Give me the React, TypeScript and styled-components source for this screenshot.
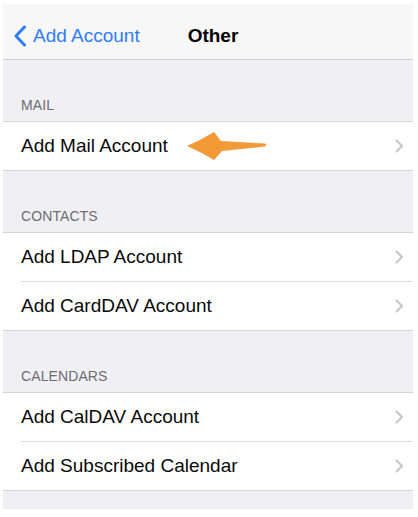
import React from 'react';
import styled, { createGlobalStyle } from 'styled-components';

const GlobalStyle = createGlobalStyle`
  body {
    margin: 0;
    background: #ffffff;
    font-family: 'Liberation Sans', Arial, sans-serif;
  }
`;

interface Section {
  title: string;
  items: string[];
}

const sections: Section[] = [
  { title: 'MAIL', items: ['Add Mail Account'] },
  { title: 'CONTACTS', items: ['Add LDAP Account', 'Add CardDAV Account'] },
  { title: 'CALENDARS', items: ['Add CalDAV Account', 'Add Subscribed Calendar'] },
];

const BackChevron = () => (
  <svg width="14" height="22" viewBox="0 0 14 22">
    <path d="M11.5 2 L3 11 L11.5 20" fill="none" stroke="#2f7df6" strokeWidth="3" strokeLinecap="round" strokeLinejoin="round" />
  </svg>
);

const RowChevron = () => (
  <svg width="9" height="14" viewBox="0 0 9 14">
    <path d="M1.5 1.5 L7 7 L1.5 12.5" fill="none" stroke="#c5c5c9" strokeWidth="2" strokeLinecap="round" strokeLinejoin="round" />
  </svg>
);

const PointerArrow = () => (
  <ArrowBox>
    <svg width="84" height="32" viewBox="0 0 84 32">
      <path
        d="M2 16 Q16 10 29 2 L36 11 L80 13.5 Q82.5 15 80 16.5 L37 21 L29 30 Q16 22 2 16 Z"
        fill="#f29a38"
      />
    </svg>
  </ArrowBox>
);

const App: React.FC = () => {
  return (
    <Screen>
      <GlobalStyle />
      <NavBar>
        <BackButton>
          <BackChevron />
          <span>Add Account</span>
        </BackButton>
        <NavTitle>Other</NavTitle>
        <span />
      </NavBar>
      {sections.map((section) => (
        <React.Fragment key={section.title}>
          <SectionHeader>{section.title}</SectionHeader>
          <Group>
            {section.items.map((item, i) => (
              <Row key={item}>
                <RowInner $first={i === 0}>
                  <RowLabel>{item}</RowLabel>
                  <RowChevron />
                </RowInner>
                {item === 'Add Mail Account' && <PointerArrow />}
              </Row>
            ))}
          </Group>
        </React.Fragment>
      ))}
      <Footer />
    </Screen>
  );
};

export default App;

const Screen = styled.div`
  margin: 4px 5px 0 3px;
  background: #efeff4;
  display: flex;
  flex-direction: column;
`;

const NavBar = styled.div`
  height: 56px;
  box-sizing: border-box;
  padding-top: 8px;
  background: #f7f7f8;
  border-bottom: 1px solid #cfcfd3;
  display: grid;
  grid-template-columns: 1fr auto 1fr;
  align-items: center;
`;

const BackButton = styled.div`
  display: flex;
  align-items: center;
  gap: 6px;
  padding-left: 10px;
  color: #2f7df6;
  font-size: 19px;
  line-height: 22px;
`;

const NavTitle = styled.div`
  font-size: 19px;
  font-weight: 700;
  color: #000;
  padding-left: 10px;
`;

const SectionHeader = styled.div`
  height: 61px;
  box-sizing: border-box;
  display: flex;
  align-items: flex-end;
  padding: 0 18px 7px;
  font-size: 14px;
  line-height: 17px;
  color: #6d6d72;
  letter-spacing: 0.1px;
`;

const Group = styled.div`
  background: #ffffff;
  border-top: 1px solid #d6d6da;
  border-bottom: 1px solid #d6d6da;
`;

const Row = styled.div`
  position: relative;
  padding-left: 18px;
`;

const RowInner = styled.div<{ $first: boolean }>`
  height: 48px;
  display: flex;
  align-items: center;
  justify-content: space-between;
  padding-right: 9px;
  border-top: ${(p) => (p.$first ? 'none' : '1px solid #dcdce0')};
`;

const RowLabel = styled.span`
  font-size: 19px;
  color: #0a0a0a;
`;

const ArrowBox = styled.div`
  position: absolute;
  left: 182px;
  top: 8px;
  width: 84px;
  height: 32px;
  svg {
    display: block;
  }
`;

const Footer = styled.div`
  height: 18px;
`;
